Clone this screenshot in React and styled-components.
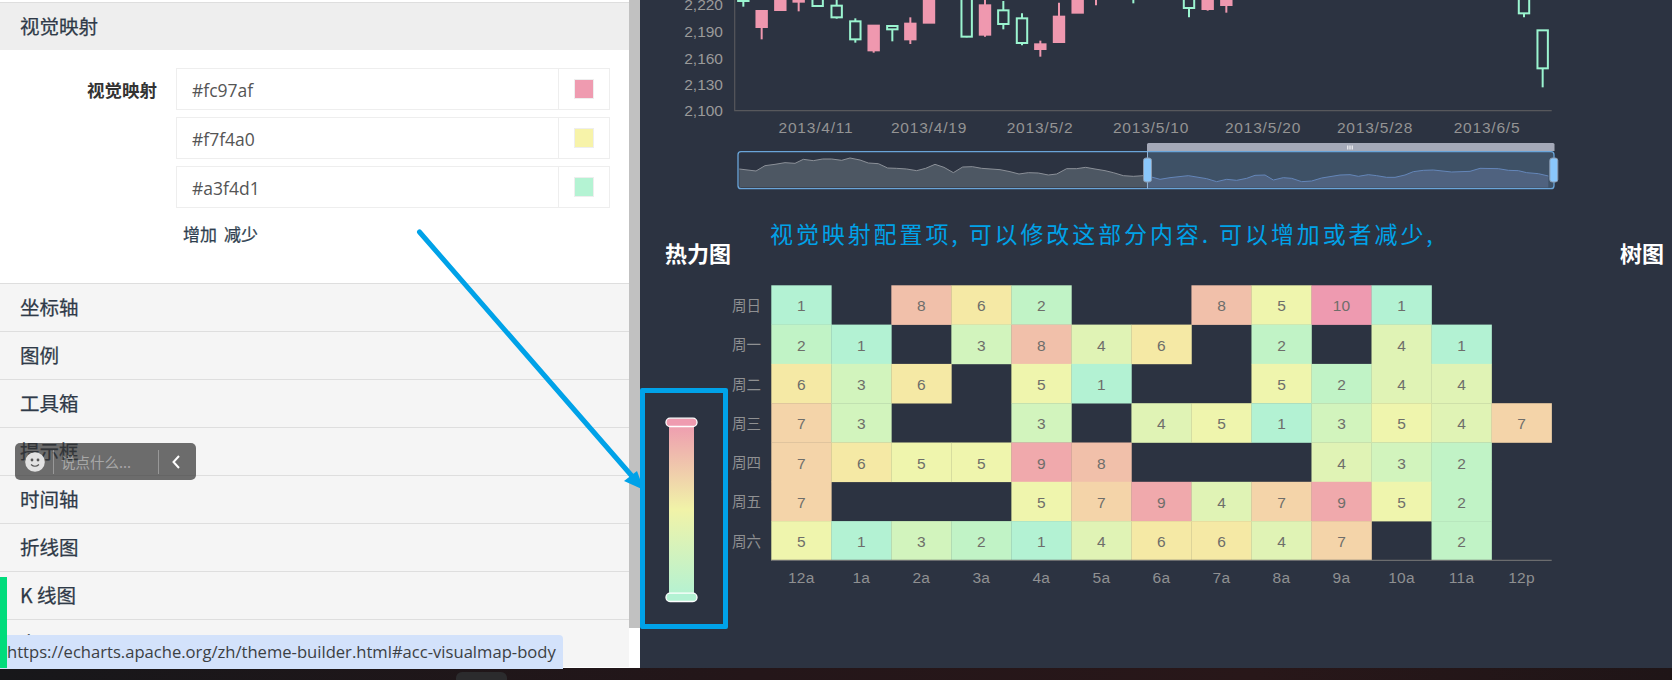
import React from 'react'
import styled, { createGlobalStyle } from 'styled-components'

const CJK = `"Noto Sans CJK SC", "Noto Sans", sans-serif`
const PINK = '#ef98af'
const GREEN = '#9bf5d0'
const BLUE = '#00a2e8'

const GlobalStyle = createGlobalStyle`
  * { margin: 0; padding: 0; box-sizing: border-box; }
  html, body { width: 1672px; height: 680px; overflow: hidden; background: #1f1517; }
  body { font-family: ${CJK}; }
`

const Page = styled.div`
  position: relative;
  width: 1672px;
  height: 680px;
  overflow: hidden;
`
const Main = styled.div`
  display: flex;
  height: 668px;
`
const Sidebar = styled.div`
  display: flex;
  width: 640px;
  background: #fff;
`
const Accordion = styled.div`
  width: 629px;
  padding-top: 2px;
  overflow: hidden;
`
const ScrollTrack = styled.div`
  width: 11px;
  background: #fff;
`
const ScrollThumb = styled.div`
  height: 628px;
  background: #c1c1c1;
`
const SectionHead = styled.div`
  display: flex;
  align-items: center;
  height: 48px;
  padding: 0 0 2px 20px;
  border-top: 1px solid #dedede;
  background: ${p => (p.$open ? '#eee' : '#f5f5f5')};
  color: #2f3a48;
  font-size: 19.5px;
  font-weight: 400;
  -webkit-text-stroke: 0.25px #2f3a48;
`
const SectionBody = styled.div`
  display: flex;
  height: 233px;
  padding-top: 18px;
`
const FieldLabel = styled.div`
  width: 157px;
  height: 42px;
  padding-top: 1px;
  line-height: 42px;
  text-align: right;
  color: #333;
  font-size: 17.5px;
  font-weight: 700;
`
const Fields = styled.div`
  display: flex;
  flex-direction: column;
  gap: 7px;
  width: 434px;
  margin-left: 19px;
`
const ColorRow = styled.div`
  display: flex;
  height: 42px;
  border: 1px solid #eee;
  background: #fff;
`
const ColorValue = styled.div`
  flex: 1;
  display: flex;
  align-items: center;
  padding: 1px 0 0 15px;
  border-right: 1px solid #eee;
  color: #555;
  font-family: "Open Sans", sans-serif;
  font-size: 17.5px;
`
const SwatchCell = styled.div`
  display: flex;
  align-items: center;
  justify-content: center;
  width: 50px;
`
const Swatch = styled.div`
  width: 20px;
  height: 20px;
  border: 1px solid #eee;
  background: ${p => p.$color};
`
const Actions = styled.div`
  display: flex;
  gap: 7px;
  margin: 6px 0 0 7px;
  color: #2f3f50;
  font-size: 17px;
  font-weight: 400;
  -webkit-text-stroke: 0.25px #2f3f50;
`

const Dark = styled.div`
  flex: 1;
  display: flex;
  flex-direction: column;
  background: #2c3341;
`
const Chart = styled.svg`
  display: block;
  flex: none;
  font-family: "Liberation Sans", ${CJK};
`
const TitleRow = styled.div`
  display: flex;
  justify-content: space-between;
  height: 84px;
  padding: 37px 8px 0 25px;
  color: #fff;
  font-size: 22px;
  font-weight: 700;
  line-height: 30px;
`
const BottomBar = styled.div`
  display: flex;
  height: 12px;
  padding-left: 456px;
  background: linear-gradient(90deg, #17171a, #241619 45%, #281719 75%, #1f1517);
`
const TaskTab = styled.div`
  width: 51px;
  height: 8px;
  margin-top: 4px;
  border-radius: 6px 6px 0 0;
  background: #2b2b2d;
`

// things lying over the page
const GreenEdge = styled.div`
  position: absolute;
  left: 0;
  top: 577px;
  width: 7px;
  height: 91px;
  background: #00dc7c;
`
const StatusUrl = styled.div`
  position: absolute;
  left: 0;
  top: 635px;
  width: 563px;
  height: 34px;
  padding-left: 7px;
  border-top-right-radius: 4px;
  background: #d3e2fb;
  color: #3c4043;
  font-family: "Open Sans", sans-serif;
  font-size: 16.6px;
  line-height: 33px;
  white-space: nowrap;
`
const ChatBar = styled.div`
  position: absolute;
  left: 15px;
  top: 443px;
  display: flex;
  align-items: center;
  width: 181px;
  height: 37px;
  border-radius: 5px;
  background: rgba(50, 50, 50, 0.7);
`
const ChatFace = styled.svg`
  flex: none;
  margin: 0 8px 0 10px;
`
const ChatDivider = styled.div`
  flex: none;
  width: 1px;
  height: 24px;
  background: rgba(255, 255, 255, 0.3);
`
const ChatHint = styled.div`
  flex: none;
  width: 104px;
  padding-left: 7px;
  color: rgba(255, 255, 255, 0.42);
  font-size: 14.5px;
  white-space: nowrap;
`
const ChatArrow = styled.svg`
  flex: none;
  margin-left: 12px;
`
const Highlight = styled.div`
  position: absolute;
  left: 640px;
  top: 388px;
  width: 88px;
  height: 241px;
  border: 5px solid ${BLUE};
  border-radius: 2px;
`
const Note = styled.div`
  position: absolute;
  left: 770px;
  top: 215px;
  color: ${BLUE};
  font-size: 23px;
  letter-spacing: 2.9px;
  line-height: 36px;
  font-weight: 400;
  white-space: nowrap;
`
const ArrowLayer = styled.svg`
  position: absolute;
  left: 0;
  top: 0;
  pointer-events: none;
`

const sections = ['坐标轴', '图例', '工具箱', '提示框', '时间轴', '折线图', 'K 线图', '力导图']
const swatches = ['#fc97af', '#f7f4a0', '#a3f4d1']
const swatchShown = ['#ef9bb0', '#f7f3a9', '#b4f3d3']

// x center, body top, body bottom, wick top, wick bottom (page pixels)
const z3 = (x, a, b, c, d) => [640 + x / 3, a / 3, b / 3, c / 3, d / 3]
const z4 = (x, a, b, c, d) => [1150 + x / 3, a / 3, b / 3, c / 3, d / 3]
const candles = [
  { up: true, v: z3(310, -9, 3, -9, 20) },
  { v: z3(365, 33, 81, 33, 118) },
  { v: z3(421, -9, 30, -9, 30) },
  { v: z3(476, -9, 5, -9, 34) },
  { up: true, v: z3(533, -9, 18, -9, 20) },
  { up: true, v: z3(590, 17, 52, -9, 56) },
  { up: true, v: z3(646, 64, 118, 55, 128) },
  { v: z3(701, 77, 151, 77, 158) },
  { up: true, v: z3(757, 78, 88, 75, 124) },
  { v: z3(811, 71, 118, 52, 132) },
  { v: z3(867, -9, 68, -9, 68) },
  { up: true, v: z3(980, -9, 110, -9, 112) },
  { v: z3(1035, 16, 104, -9, 110) },
  { up: true, v: z3(1090, 31, 72, 3, 88) },
  { up: true, v: z3(1146, 55, 129, 40, 136) },
  { v: z3(1201, 133, 147, 122, 170) },
  { v: z3(1257, 50, 126, 8, 128) },
  { v: z3(1313, -9, 38, -9, 38) },
  { v: z3(1368, -9, -3, -9, 16) },
  { up: true, v: z3(1480, -9, -3, -9, 10) },
  { up: true, v: z4(117, -9, 24, -9, 52) },
  { v: z4(173, -9, 27, -9, 32) },
  { v: z4(229, -9, 15, -9, 38) },
  { up: true, v: z4(1122, -9, 40, -9, 52) },
  { up: true, v: z4(1178, 91, 205, 91, 262) },
]

const yLabels = [['2,220', 4.5], ['2,190', 31.5], ['2,160', 58], ['2,130', 84.5], ['2,100', 110.5]]
const xLabels = [
  ['2013/4/11', 816], ['2013/4/19', 929], ['2013/5/2', 1040], ['2013/5/10', 1151],
  ['2013/5/20', 1263], ['2013/5/28', 1375], ['2013/6/5', 1487],
]

const leftShadow = [[298,507],[348,513],[375,497],[405,493],[435,488],[465,490],[490,478],[520,482],[548,477],[575,477],[605,481],[630,474],[660,480],[685,489],[715,491],[743,504],[770,505],[800,507],[830,512],[857,505],[885,493],[912,502],[940,518],[968,501],[997,500],[1025,505],[1080,509],[1110,515],[1137,522],[1165,518],[1195,519],[1225,525],[1250,522],[1280,506],[1310,506],[1337,502],[1365,507],[1395,512],[1420,518],[1450,527],[1480,529],[1510,527],[1522,530]]
  .map(([x, y]) => [640 + x / 3, y / 3])
const rightShadow = [[-10,527],[30,538],[60,533],[115,527],[170,536],[200,545],[230,538],[260,541],[290,535],[315,526],[345,525],[370,540],[400,533],[425,535],[455,545],[485,543],[515,534],[570,525],[600,524],[625,529],[655,524],[680,527],[710,532],[735,532],[765,525],[790,515],[820,511],[850,510],[905,516],[960,514],[990,505],[1045,506],[1075,511],[1105,512],[1130,518],[1165,521],[1195,528]]
  .map(([x, y]) => [1150 + x / 3, y / 3])

const toPts = pts => pts.map(p => p.join(',')).join(' ')
const area = pts => `${pts[0][0]},187.5 ${toPts(pts)} ${pts[pts.length - 1][0]},187.5`

function KLine() {
  return (
    <Chart width="1032" height="200" viewBox="640 0 1032 200">
      <path d="M734.7 0V110.7H1551.7" fill="none" stroke="#57585c" strokeWidth="1.2" />
      {yLabels.map(([t, y]) => (
        <text key={t} x="723" y={y + 5.5} textAnchor="end" fontSize="15.5" fill="#9a9a9a">{t}</text>
      ))}
      {xLabels.map(([t, x]) => (
        <text key={t} x={x} y="132.5" textAnchor="middle" fontSize="15.5" letterSpacing="0.8" fill="#949494">{t}</text>
      ))}
      {candles.map(({ up, v: [x, a, b, c, d] }) => (
        <g key={x} stroke={up ? GREEN : PINK} strokeWidth="2">
          <line x1={x} x2={x} y1={c} y2={a} />
          <line x1={x} x2={x} y1={b} y2={d} />
          <rect x={x - 5.2} y={a} width="10.4" height={b - a} fill={up ? '#2c3341' : PINK} />
        </g>
      ))}
      <rect x="1147" y="151.7" width="407" height="37" fill="#3e5166" />
      <polygon points={area(leftShadow)} fill="#4d5763" />
      <polyline points={toPts(leftShadow)} fill="none" stroke="#8b9098" strokeWidth="1" />
      <polygon points={area(rightShadow)} fill="#4f627f" />
      <polyline points={toPts(rightShadow)} fill="none" stroke="#6486b9" strokeWidth="1" />
      <rect x="738" y="151.7" width="816" height="37" rx="3" fill="none" stroke="#6aa5d9" strokeWidth="1.3" />
      <path d="M1147 151H1554.5V144.5Q1554.5 143 1553 143H1148.5Q1147 143 1147 144.5Z" fill="#a4a9b8" />
      <path d="M1347.8 145.5v4M1350 145.5v4M1352.2 145.5v4" stroke="#fff" strokeWidth="1" />
      <line x1="1147.5" x2="1147.5" y1="151" y2="189" stroke="#8fb2d4" strokeWidth="1" />
      <rect x="1143.5" y="158" width="8" height="24" rx="2.5" fill="#8ac7fb" stroke="#8a9bb0" />
      <rect x="1549.8" y="158" width="8" height="24" rx="2.5" fill="#8ac7fb" stroke="#8a9bb0" />
    </Chart>
  )
}

const heatColors = {
  1: '#b3f2d3', 2: '#c1f3c6', 3: '#d2f4bd', 4: '#e0f3b5', 5: '#eff5ad',
  6: '#f5e9a5', 7: '#f4d4a9', 8: '#f1c0aa', 9: '#f0a9ac', 10: '#ee9ab0',
}
const days = ['周日', '周一', '周二', '周三', '周四', '周五', '周六']
const hours = ['12a', '1a', '2a', '3a', '4a', '5a', '6a', '7a', '8a', '9a', '10a', '11a', '12p']
const heat = [
  [1, 0, 8, 6, 2, 0, 0, 8, 5, 10, 1, 0, 0],
  [2, 1, 0, 3, 8, 4, 6, 0, 2, 0, 4, 1, 0],
  [6, 3, 6, 0, 5, 1, 0, 0, 5, 2, 4, 4, 0],
  [7, 3, 0, 0, 3, 0, 4, 5, 1, 3, 5, 4, 7],
  [7, 6, 5, 5, 9, 8, 0, 0, 0, 4, 3, 2, 0],
  [7, 0, 0, 0, 5, 7, 9, 4, 7, 9, 5, 2, 0],
  [5, 1, 3, 2, 1, 4, 6, 6, 4, 7, 0, 2, 0],
]
const CELL_W = 60.02
const CELL_H = 39.3
const HEAT_X = 771.3
const HEAT_Y = 285.3

function Heatmap() {
  const bottom = HEAT_Y + CELL_H * 7
  return (
    <Chart width="1032" height="384" viewBox="640 284 1032 384">
      <defs>
        <linearGradient id="vm" x1="0" y1="0" x2="0" y2="1">
          <stop offset="0" stopColor="#ee9ab0" />
          <stop offset="0.5" stopColor="#f1f3a8" />
          <stop offset="1" stopColor="#b3f2d3" />
        </linearGradient>
      </defs>
      {heat.map((row, r) => row.map((v, c) => v > 0 && (
        <g key={`${r}-${c}`}>
          <rect
            x={HEAT_X + c * CELL_W}
            y={HEAT_Y + r * CELL_H}
            width={CELL_W + 0.3}
            height={CELL_H + 0.3}
            fill={heatColors[v]}
          />
          <text
            x={HEAT_X + (c + 0.5) * CELL_W}
            y={HEAT_Y + (r + 0.5) * CELL_H + 6.5}
            textAnchor="middle"
            fontSize="15.5"
            fill="#6e6e6a"
          >
            {v}
          </text>
        </g>
      )))}
      <line x1={HEAT_X} x2="1551.7" y1={bottom} y2={bottom} stroke="#6b6c6e" strokeWidth="1.2" />
      {days.map((d, r) => (
        <text key={d} x="761" y={HEAT_Y + (r + 0.5) * CELL_H + 6} textAnchor="end" fontSize="14.5" fontFamily={CJK} fill="#8f9092">{d}</text>
      ))}
      {hours.map((h, c) => (
        <text key={h} x={HEAT_X + (c + 0.5) * CELL_W} y="583" textAnchor="middle" fontSize="15.5" letterSpacing="0.3" fill="#8f9092">{h}</text>
      ))}
      <rect x="669" y="422" width="25" height="175" fill="url(#vm)" />
      <rect x="666" y="418.2" width="31" height="8.3" rx="4" fill="#ef9bb0" stroke="#fff" strokeWidth="1.3" />
      <rect x="666" y="593.2" width="31" height="8.3" rx="4" fill="#b3f2d3" stroke="#fff" strokeWidth="1.3" />
    </Chart>
  )
}

export default function App() {
  return (
    <Page>
      <GlobalStyle />
      <Main>
        <Sidebar>
          <Accordion>
            <SectionHead $open>视觉映射</SectionHead>
            <SectionBody>
              <FieldLabel>视觉映射</FieldLabel>
              <Fields>
                {swatches.map((c, i) => (
                  <ColorRow key={c}>
                    <ColorValue>{c}</ColorValue>
                    <SwatchCell><Swatch $color={swatchShown[i]} /></SwatchCell>
                  </ColorRow>
                ))}
                <Actions><span>增加</span><span>减少</span></Actions>
              </Fields>
            </SectionBody>
            {sections.map(s => <SectionHead key={s}>{s}</SectionHead>)}
          </Accordion>
          <ScrollTrack><ScrollThumb /></ScrollTrack>
        </Sidebar>
        <Dark>
          <KLine />
          <TitleRow><span>热力图</span><span>树图</span></TitleRow>
          <Heatmap />
        </Dark>
      </Main>
      <BottomBar><TaskTab /></BottomBar>

      <StatusUrl>https://echarts.apache.org/zh/theme-builder.html#acc-visualmap-body</StatusUrl>
      <GreenEdge />
      <ChatBar>
        <ChatFace width="20" height="20" viewBox="0 0 20 20">
          <circle cx="10" cy="10" r="9.8" fill="#e2e2e2" />
          <circle cx="7" cy="8" r="1.4" fill="#555" />
          <circle cx="13" cy="8" r="1.4" fill="#555" />
          <path d="M6 12.5q4 3.5 8 0" fill="none" stroke="#555" strokeWidth="1.2" />
        </ChatFace>
        <ChatDivider />
        <ChatHint>说点什么...</ChatHint>
        <ChatDivider />
        <ChatArrow width="10" height="16" viewBox="0 0 10 16">
          <path d="M8 2L2.5 8L8 14" fill="none" stroke="#fff" strokeWidth="2" />
        </ChatArrow>
      </ChatBar>
      <ArrowLayer width="1672" height="680" viewBox="0 0 1672 680">
        <line x1="419.5" y1="232" x2="638" y2="483" stroke={BLUE} strokeWidth="5" strokeLinecap="round" />
        <polygon points="624,481 637,471 644,490" fill={BLUE} />
      </ArrowLayer>
      <Highlight />
      <Note>视觉映射配置项, 可以修改这部分内容. 可以增加或者减少,</Note>
    </Page>
  )
}
